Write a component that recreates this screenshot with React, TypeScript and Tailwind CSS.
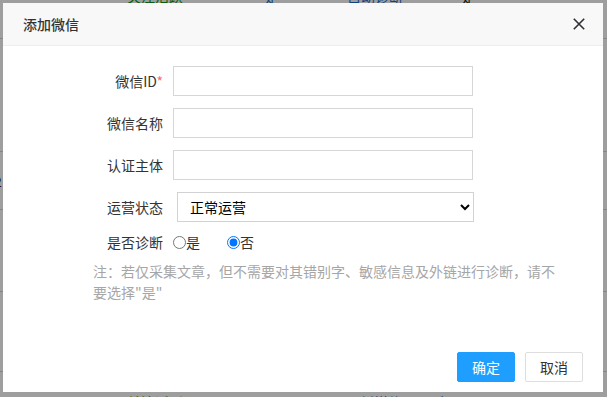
import React from "react";

const font = { fontFamily: '"Noto Sans CJK SC", "Noto Sans", sans-serif' };

function BgRow({ h, cells, pt }: { h: number; pt?: number; cells: { text: string; cls: string }[] }) {
  return (
    <div
      className="flex border-b border-[#d8d8d8] shrink-0"
      style={{ height: h, paddingTop: pt ?? 0 }}
    >
      {cells.map((c, i) => (
        <div key={i} className={c.cls}>
          {c.text}
        </div>
      ))}
    </div>
  );
}

export default function App() {
  return (
    <div className="relative w-[607px] h-[397px] overflow-hidden bg-white" style={font}>
      {/* page behind the dialog */}
      <div className="flex flex-col -mt-[30px] text-[14px] leading-[18px]">
        <BgRow
          h={69}
          pt={17}
          cells={[
            { text: "", cls: "w-[127px]" },
            { text: "关注活跃", cls: "w-[138px] text-[#129a12]" },
            { text: "是", cls: "w-[82px] text-[#1e6fd0]" },
            { text: "自动诊断", cls: "w-[115px] text-[#1e6fd0]" },
            { text: "是", cls: "text-[#222]" },
          ]}
        />
        <BgRow h={113} cells={[]} />
        <BgRow
          h={58}
          pt={20}
          cells={[{ text: "2", cls: "-ml-[6px] w-[20px] text-[#222]" }]}
        />
        <BgRow h={82} cells={[]} />
        <BgRow h={80} cells={[]} />
        <BgRow
          h={60}
          pt={21}
          cells={[
            { text: "", cls: "w-[127px]" },
            { text: "关注活跃", cls: "w-[113px] text-[#129a12]" },
            { text: "是", cls: "w-[120px] text-[#1e6fd0]" },
            { text: "新媒体 · 正在诊断", cls: "w-[100px] text-[#1e6fd0]" },
            { text: "是", cls: "text-[#222]" },
          ]}
        />
      </div>

      {/* shade */}
      <div className="absolute inset-0 bg-black/[0.38]" />

      {/* dialog */}
      <div className="absolute left-[3px] top-[3px] w-[600px] h-[389px] bg-white flex flex-col">
        <div className="h-[43px] shrink-0 bg-[#f8f8f8] border-b border-[#eeeeee] flex items-center justify-between pl-[20px] pr-[18px]">
          <span className="text-[14px] text-[#333] font-medium">添加微信</span>
          <svg width="12" height="12" viewBox="0 0 12 12" className="mr-[0px]">
            <path d="M0.8 0.8 L11.2 11.2 M11.2 0.8 L0.8 11.2" stroke="#2f2f35" strokeWidth="1.6" />
          </svg>
        </div>

        <div className="flex-1 flex flex-col pt-[20px] text-[14px] text-[#333]">
          {["微信ID", "微信名称", "认证主体"].map((label, i) => (
            <div key={label} className={`flex items-center h-[30px] ${i > 0 ? "mt-[12px]" : ""}`}>
              <div className="w-[160px] text-right leading-[20px]">
                {label}
                {i === 0 && <span className="text-[#f56c6c]">*</span>}
              </div>
              <input
                type="text"
                className="ml-[10px] w-[300px] h-[30px] border border-[#d6d6d6] bg-white outline-none px-[8px] text-[14px]"
              />
            </div>
          ))}

          <div className="flex items-center h-[30px] mt-[12px]">
            <div className="w-[160px] text-right leading-[20px]">运营状态</div>
            <select
              defaultValue="正常运营"
              className="ml-[14px] w-[297px] h-[30px] border border-[#d2d2d2] bg-white pl-[8px] text-[14px] text-black outline-none"
              style={font}
            >
              <option>正常运营</option>
              <option>暂停运营</option>
            </select>
          </div>

          <div className="flex items-center h-[20px] mt-[10px]">
            <div className="w-[160px] text-right leading-[20px]">是否诊断</div>
            <label className="flex items-center ml-[10px]">
              <input type="radio" name="diag" className="m-0 w-[13px] h-[13px]" />
              <span className="leading-[20px]">是</span>
            </label>
            <label className="flex items-center ml-[27px]">
              <input type="radio" name="diag" defaultChecked className="m-0 w-[13px] h-[13px]" />
              <span className="leading-[20px]">否</span>
            </label>
          </div>

          <p className="mt-[9px] ml-[90px] w-[470px] text-[14px] leading-[21px] text-[#a6a6a6]">
            注：若仅采集文章，但不需要对其错别字、敏感信息及外链进行诊断，请不要选择"是"
          </p>
        </div>

        <div className="flex justify-end gap-[10px] pr-[20px] pb-[10px]">
          <button className="w-[58px] h-[30px] rounded-[2px] bg-[#1e9fff] border border-[#1e9fff] text-white text-[14px]">
            确定
          </button>
          <button className="w-[58px] h-[30px] rounded-[2px] bg-white border border-[#dedede] text-[#333] text-[14px]">
            取消
          </button>
        </div>
      </div>
    </div>
  );
}
